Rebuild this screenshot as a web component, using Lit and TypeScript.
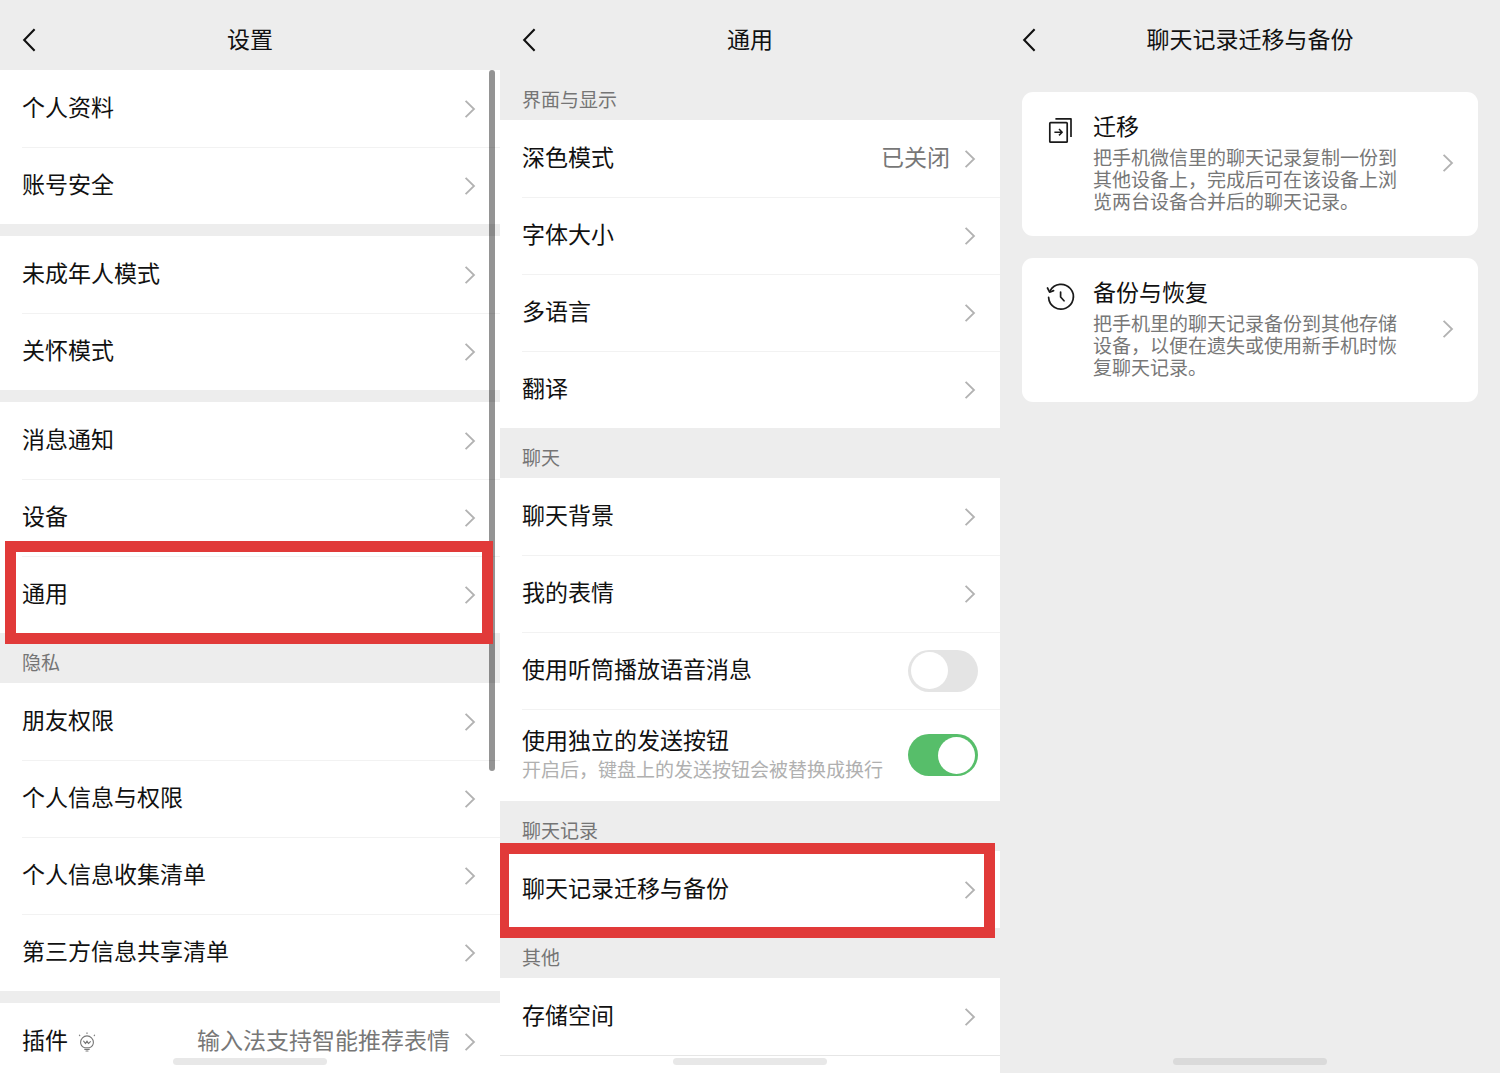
import { LitElement, html, css, svg, nothing } from "lit";
import { customElement, property } from "lit/decorators.js";

interface RowData {
  label: string;
  value?: string;
  bulb?: boolean;
  mark?: "general" | "history";
  toggle?: boolean;
  on?: boolean;
  note?: string;
}

interface GroupData {
  heading?: string;
  rows: RowData[];
}

const SETTINGS: GroupData[] = [
  { rows: [{ label: "个人资料" }, { label: "账号安全" }] },
  { rows: [{ label: "未成年人模式" }, { label: "关怀模式" }] },
  { rows: [{ label: "消息通知" }, { label: "设备" }, { label: "通用", mark: "general" }] },
  {
    heading: "隐私",
    rows: [
      { label: "朋友权限" },
      { label: "个人信息与权限" },
      { label: "个人信息收集清单" },
      { label: "第三方信息共享清单" },
    ],
  },
  { rows: [{ label: "插件", bulb: true, value: "输入法支持智能推荐表情" }] },
];

const GENERAL: GroupData[] = [
  {
    heading: "界面与显示",
    rows: [
      { label: "深色模式", value: "已关闭" },
      { label: "字体大小" },
      { label: "多语言" },
      { label: "翻译" },
    ],
  },
  {
    heading: "聊天",
    rows: [
      { label: "聊天背景" },
      { label: "我的表情" },
      { label: "使用听筒播放语音消息", toggle: true, on: false },
      {
        label: "使用独立的发送按钮",
        toggle: true,
        on: true,
        note: "开启后，键盘上的发送按钮会被替换成换行",
      },
    ],
  },
  { heading: "聊天记录", rows: [{ label: "聊天记录迁移与备份", mark: "history" }] },
  { heading: "其他", rows: [{ label: "存储空间" }] },
];

const chevron = html`<svg class="chevron" width="12" height="20" viewBox="0 0 12 20" aria-hidden="true">
  <path d="M1.6 1.8 L10 10 L1.6 18.2" fill="none" stroke="#b2b2b2" stroke-width="1.8" />
</svg>`;

const bulbIcon = html`<svg class="bulb" width="18" height="20" viewBox="0 0 18 20" aria-hidden="true">
  <g fill="none" stroke="#777" stroke-width="1.1" stroke-linecap="round" stroke-linejoin="round">
    <path d="M6.6 15.8 C4 14.8 2.6 12.8 2.6 10.3 A6.4 6.4 0 0 1 15.4 10.3 C15.4 12.8 14 14.8 11.4 15.8 Z" />
    <path d="M6.8 17.4 H11.2 M8 19 H10" />
    <path d="M5.6 9.2 L7.6 11.6 L9 9 L10.4 11.6 L12.4 9.6" />
    <path d="M9 0.8 V1.4 M1.4 3.2 L1.8 3.6 M16.6 3.2 L16.2 3.6" />
  </g>
</svg>`;

const migrateIcon = svg`<g fill="none" stroke="#1a1a1a" stroke-width="1.7" stroke-linejoin="round">
  <rect x="3.8" y="6.6" width="17.4" height="19.6" rx="0.8" />
  <path d="M9.4 2.9 H25 V21" />
  <path d="M8.4 16.2 H16 M13 13 L16.2 16.2 L13 19.4" stroke-width="1.5" />
</g>`;

const restoreIcon = svg`<g fill="none" stroke="#1a1a1a" stroke-width="1.7" stroke-linecap="round" stroke-linejoin="round">
  <path d="M2.6 15.4 A12.4 12.4 0 1 0 4.2 8.6" />
  <path d="M1.5 6 L3.6 10.2 L7.6 8.6" />
  <path d="M14.6 10 V15 L18 18.8" />
</g>`;

const typeface = css`
  :host {
    font-family: "Noto Sans CJK SC", "Noto Sans", sans-serif;
    color: #111;
  }
`;

@customElement("nav-header")
class NavHeader extends LitElement {
  @property() heading = "";

  static styles = [
    typeface,
    css`
      :host {
        display: block;
      }
      .bar {
        display: grid;
        grid-template-columns: 60px 1fr 60px;
        align-items: center;
        height: 70px;
        padding-top: 10px;
        box-sizing: border-box;
      }
      .back {
        display: flex;
        align-items: center;
        height: 40px;
        border: 0;
        padding: 0 0 0 22px;
        background: none;
      }
      .title {
        margin: 0;
        padding-bottom: 5px;
        font-size: 23px;
        font-weight: 400;
        line-height: 32px;
        text-align: center;
      }
    `,
  ];

  render() {
    return html`<header class="bar">
      <button class="back" aria-label="返回">
        <svg width="14" height="24" viewBox="0 0 14 24" aria-hidden="true">
          <path d="M12.6 1.2 L2.2 12 L12.6 22.8" fill="none" stroke="#111" stroke-width="2.1" />
        </svg>
      </button>
      <h1 class="title">${this.heading}</h1>
    </header>`;
  }
}

@customElement("settings-list")
class SettingsList extends LitElement {
  @property({ attribute: false }) groups: GroupData[] = [];

  static styles = [
    typeface,
    css`
      :host {
        display: block;
      }
      .spacer {
        height: 12px;
      }
      .heading {
        margin: 0;
        padding: 15px 22px 7px;
        font-size: 19px;
        font-weight: 400;
        line-height: 28px;
        color: #757575;
      }
      .rows {
        list-style: none;
        margin: 0;
        padding: 0;
        background: #fff;
      }
      .item {
        position: relative;
      }
      .item + .item::before {
        content: "";
        position: absolute;
        top: 0;
        left: 22px;
        right: 0;
        height: 1px;
        background: #f2f2f2;
      }
      .row {
        display: flex;
        align-items: center;
        min-height: 77px;
        padding: 0 24px 0 22px;
        box-sizing: border-box;
        color: inherit;
        text-decoration: none;
        font-size: 23px;
        line-height: 32px;
      }
      .row.switch {
        padding-right: 22px;
      }
      .row.tall {
        min-height: 92px;
      }
      .text {
        flex: 1;
        display: flex;
        flex-direction: column;
        padding-bottom: 6px;
        white-space: nowrap;
      }
      .tall .text {
        padding-bottom: 4px;
      }
      .text.inline {
        flex-direction: row;
        gap: 10px;
      }
      .bulb {
        align-self: flex-end;
        margin-bottom: 3px;
      }
      .note {
        font-size: 19px;
        line-height: 28px;
        color: #b0b0b0;
      }
      .value {
        margin-right: 14px;
        padding-bottom: 6px;
        color: #777;
        white-space: nowrap;
      }
      .toggle {
        appearance: none;
        flex: none;
        display: flex;
        align-items: center;
        width: 70px;
        height: 42px;
        margin: 0;
        padding: 0 3px;
        box-sizing: border-box;
        border-radius: 21px;
        background: #e4e4e4;
      }
      .toggle::before {
        content: "";
        width: 37px;
        height: 37px;
        border-radius: 50%;
        background: #fff;
      }
      .toggle:checked {
        justify-content: flex-end;
        background: #57be6a;
      }
      .mark {
        position: absolute;
        z-index: 3;
        box-sizing: border-box;
        border: 11px solid #e13a39;
        pointer-events: none;
      }
      .mark.general {
        inset: -15px 7px -11px 5px;
      }
      .mark.history {
        inset: -8px 5px -10px 0;
        border-left-width: 9px;
      }
    `,
  ];

  private row(r: RowData, id: string) {
    if (r.toggle) {
      return html`<div class="row switch ${r.note ? "tall" : ""}">
        <label class="text" for=${id}>
          <span>${r.label}</span>
          ${r.note ? html`<span class="note">${r.note}</span>` : nothing}
        </label>
        <input class="toggle" type="checkbox" role="switch" id=${id} ?checked=${r.on} />
      </div>`;
    }
    return html`<a class="row" href="#${id}">
      <span class="text inline">${r.label}${r.bulb ? bulbIcon : nothing}</span>
      ${r.value ? html`<span class="value">${r.value}</span>` : nothing}
      ${chevron}
    </a>`;
  }

  render() {
    return this.groups.map(
      (g, gi) => html`
        ${g.heading
          ? html`<h2 class="heading">${g.heading}</h2>`
          : gi > 0
            ? html`<div class="spacer"></div>`
            : nothing}
        <ul class="rows">
          ${g.rows.map(
            (r, ri) => html`<li class="item">
              ${this.row(r, `item-${gi}-${ri}`)}
              ${r.mark ? html`<span class="mark ${r.mark}"></span>` : nothing}
            </li>`,
          )}
        </ul>
      `,
    );
  }
}

@customElement("option-card")
class OptionCard extends LitElement {
  @property() heading = "";
  @property() text = "";
  @property() icon = "migrate";

  static styles = [
    typeface,
    css`
      :host {
        display: block;
      }
      .card {
        display: flex;
        align-items: center;
        padding: 22px 24px 24px;
        border-radius: 11px;
        background: #fff;
        color: inherit;
        text-decoration: none;
      }
      .icon {
        flex: none;
        align-self: flex-start;
        margin: 2px 17px 0 0;
      }
      .body {
        flex: 1;
        margin-right: 42px;
      }
      .title {
        margin: 0 0 10px;
        font-size: 23px;
        font-weight: 400;
        line-height: 22px;
      }
      .desc {
        margin: 0;
        font-size: 19px;
        line-height: 22px;
        color: #777;
      }
      .chevron {
        flex: none;
      }
    `,
  ];

  render() {
    return html`<a class="card" href="#${this.icon}">
      <svg class="icon" width="30" height="30" viewBox="0 0 30 30" aria-hidden="true">
        ${this.icon === "migrate" ? migrateIcon : restoreIcon}
      </svg>
      <div class="body">
        <h2 class="title">${this.heading}</h2>
        <p class="desc">${this.text}</p>
      </div>
      ${chevron}
    </a>`;
  }
}

@customElement("app-root")
class AppRoot extends LitElement {
  static styles = [
    typeface,
    css`
      :host {
        display: block;
        background: #ededed;
      }
      .screens {
        display: grid;
        grid-template-columns: repeat(3, minmax(0, 1fr));
        height: 100vh;
      }
      .screen {
        position: relative;
        overflow: hidden;
        background: #ededed;
      }
      .screen.filled {
        display: flex;
        flex-direction: column;
      }
      .rest {
        flex: 1;
        border-top: 1px solid #e6e6e6;
        background: #fff;
      }
      .scrollbar {
        position: absolute;
        z-index: 2;
        top: 70px;
        right: 5px;
        width: 6px;
        height: 701px;
        border-radius: 3px;
        background: rgba(0, 0, 0, 0.42);
      }
      .home {
        position: absolute;
        z-index: 2;
        bottom: 8px;
        left: 50%;
        width: 154px;
        height: 7px;
        margin-left: -77px;
        border-radius: 4px;
        background: #e8e8e8;
      }
      .home.dim {
        background: #dadada;
      }
      .cards {
        display: grid;
        gap: 22px;
        padding: 22px;
      }
    `,
  ];

  render() {
    return html`<main class="screens">
      <section class="screen">
        <nav-header heading="设置"></nav-header>
        <settings-list .groups=${SETTINGS}></settings-list>
        <div class="scrollbar"></div>
        <div class="home"></div>
      </section>
      <section class="screen filled">
        <nav-header heading="通用"></nav-header>
        <settings-list .groups=${GENERAL}></settings-list>
        <div class="rest"></div>
        <div class="home"></div>
      </section>
      <section class="screen">
        <nav-header heading="聊天记录迁移与备份"></nav-header>
        <div class="cards">
          <option-card
            icon="migrate"
            heading="迁移"
            text="把手机微信里的聊天记录复制一份到其他设备上，完成后可在该设备上浏览两台设备合并后的聊天记录。"
          ></option-card>
          <option-card
            icon="restore"
            heading="备份与恢复"
            text="把手机里的聊天记录备份到其他存储设备，以便在遗失或使用新手机时恢复聊天记录。"
          ></option-card>
        </div>
        <div class="home dim"></div>
      </section>
    </main>`;
  }
}
